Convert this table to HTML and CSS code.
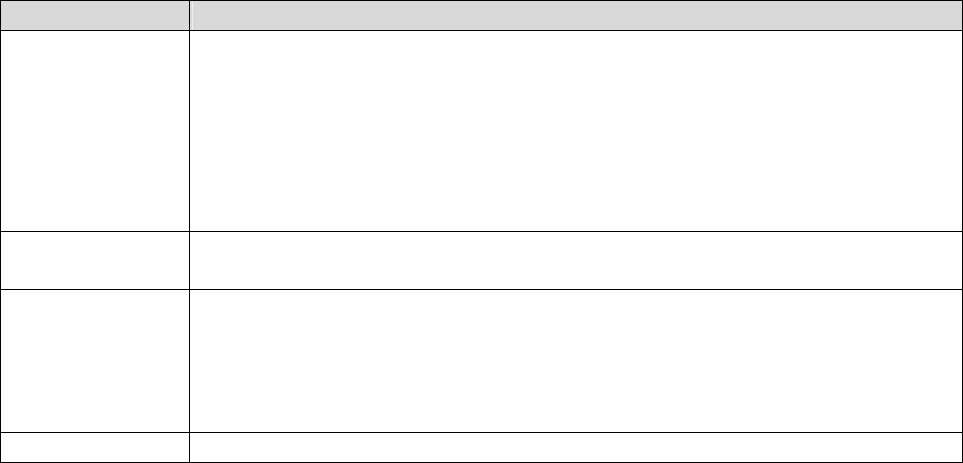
FILE: index.html
```html
<!DOCTYPE html>
<html lang="en">
<head>
<meta charset="utf-8">
<title>Table</title>
<link rel="stylesheet" href="styles.css">
</head>
<body>
<table class="grid">
  <thead>
    <tr class="row-head">
      <th class="col-a"></th>
      <th class="col-b"></th>
    </tr>
  </thead>
  <tbody>
    <tr class="row-1"><td class="col-a"></td><td class="col-b"></td></tr>
    <tr class="row-2"><td class="col-a"></td><td class="col-b"></td></tr>
    <tr class="row-3"><td class="col-a"></td><td class="col-b"></td></tr>
    <tr class="row-4"><td class="col-a"></td><td class="col-b"></td></tr>
  </tbody>
</table>
</body>
</html>
```
FILE: styles.css
```css
html, body {
  margin: 0;
  padding: 0;
  background: #ffffff;
  font-family: "Liberation Sans", Arial, sans-serif;
}

.grid {
  border-collapse: separate;
  border-spacing: 0;
  border-top: 1px solid #000;
  border-left: 1px solid #000;
  table-layout: fixed;
  width: 963px;
}

.grid th,
.grid td {
  padding: 0;
  border-right: 1px solid #000;
  border-bottom: 1px solid #000;
  box-sizing: content-box;
}

.col-a { width: 188px; }
.col-b { width: 772px; }

.row-head th {
  height: 29px;
  background: #d9d9d9;
}

.row-head .col-b {
  background: linear-gradient(to right, #d9d9d9 2px, #efefef 2px, #efefef 3px, #d9d9d9 3px);
}

.row-1 td { height: 200px; }
.row-2 td { height: 57px; }
.row-3 td { height: 142px; }
.row-4 td { height: 29px; }
```
